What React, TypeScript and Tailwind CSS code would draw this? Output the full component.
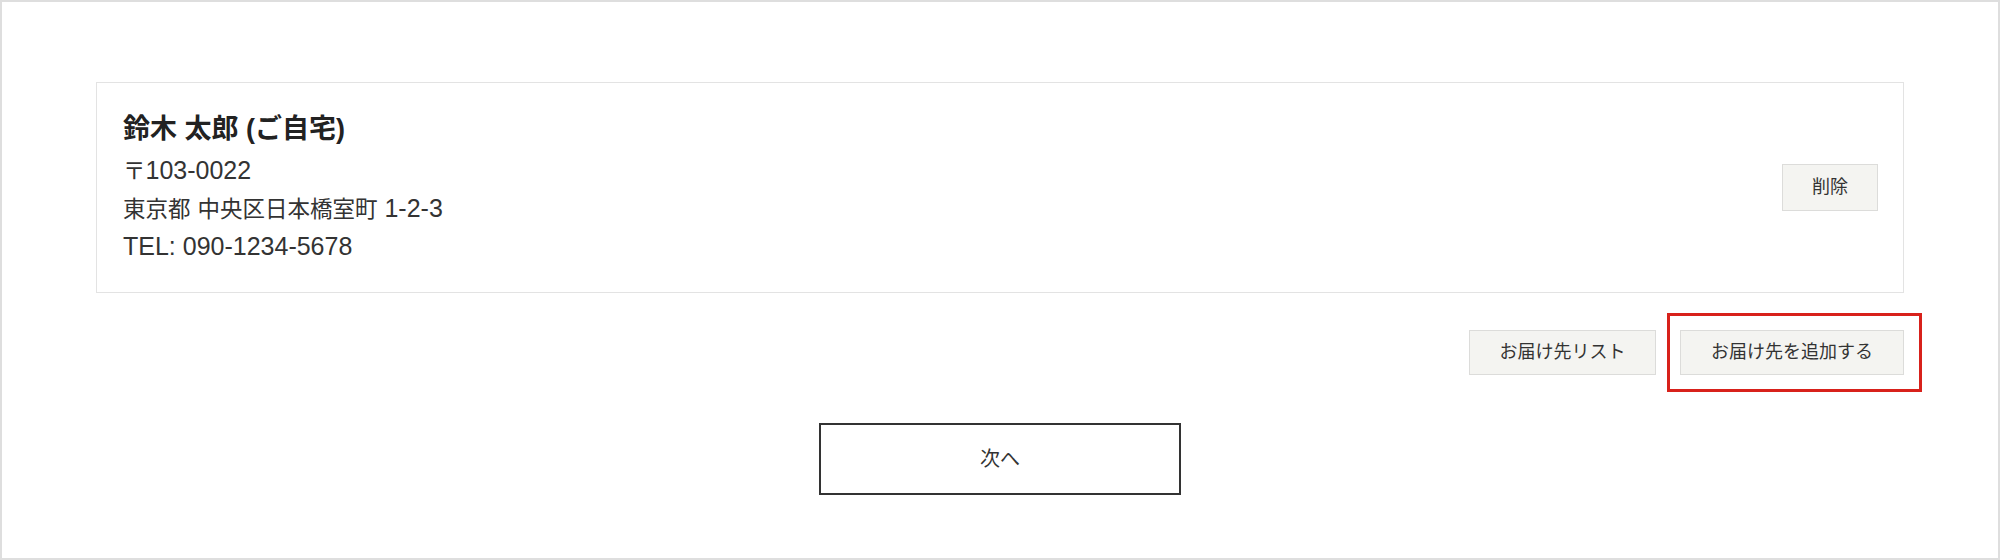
const font = {
  fontFamily: '"Liberation Sans", "Noto Sans CJK JP", sans-serif',
};

// kana/kanji run slightly smaller than the latin text, like Hiragino + Helvetica
function Ja({ children }: { children: React.ReactNode }) {
  return <span className="text-[22.5px] leading-none">{children}</span>;
}

function GrayButton({ label, width }: { label: string; width: string }) {
  return (
    <button
      className={`h-[45px] ${width} border border-[#dcdcda] bg-[#f4f4f1] text-[18px] text-[#333] flex items-center justify-center`}
    >
      {label}
    </button>
  );
}

export default function App() {
  return (
    <div
      className="w-[2000px] h-[560px] border-2 border-[#dedede] bg-white pt-[80px] px-[94px] flex flex-col"
      style={font}
    >
      <div className="border border-[#e3e3e3] py-[27px] pl-[26px] pr-[25px] flex items-center justify-between">
        <div className="text-[25px] leading-[38px] text-[#333]">
          <div className="text-[27px] font-bold text-[#222]">鈴木 太郎 (ご自宅)</div>
          <div className="mt-[3px]">
            <Ja>〒</Ja>103-0022
          </div>
          <div>
            <Ja>東京都</Ja> <Ja>中央区日本橋室町</Ja> 1-2-3
          </div>
          <div>TEL: 090-1234-5678</div>
        </div>
        <button className="w-[96px] h-[47px] border border-[#dcdcda] bg-[#f4f4f1] text-[18px] text-[#333]">
          削除
        </button>
      </div>

      <div className="mt-[37px] flex justify-end gap-[24px]">
        <GrayButton label="お届け先リスト" width="w-[187px]" />
        <div className="relative">
          <GrayButton label="お届け先を追加する" width="w-[224px]" />
          <div className="absolute -left-[13px] -right-[18px] -top-[17px] -bottom-[17px] border-[3px] border-[#d8211b] pointer-events-none" />
        </div>
      </div>

      <div className="mt-[48px] flex justify-center">
        <button className="w-[362px] h-[72px] border-2 border-[#333] bg-white text-[20px] text-[#333]">
          次へ
        </button>
      </div>
    </div>
  );
}
